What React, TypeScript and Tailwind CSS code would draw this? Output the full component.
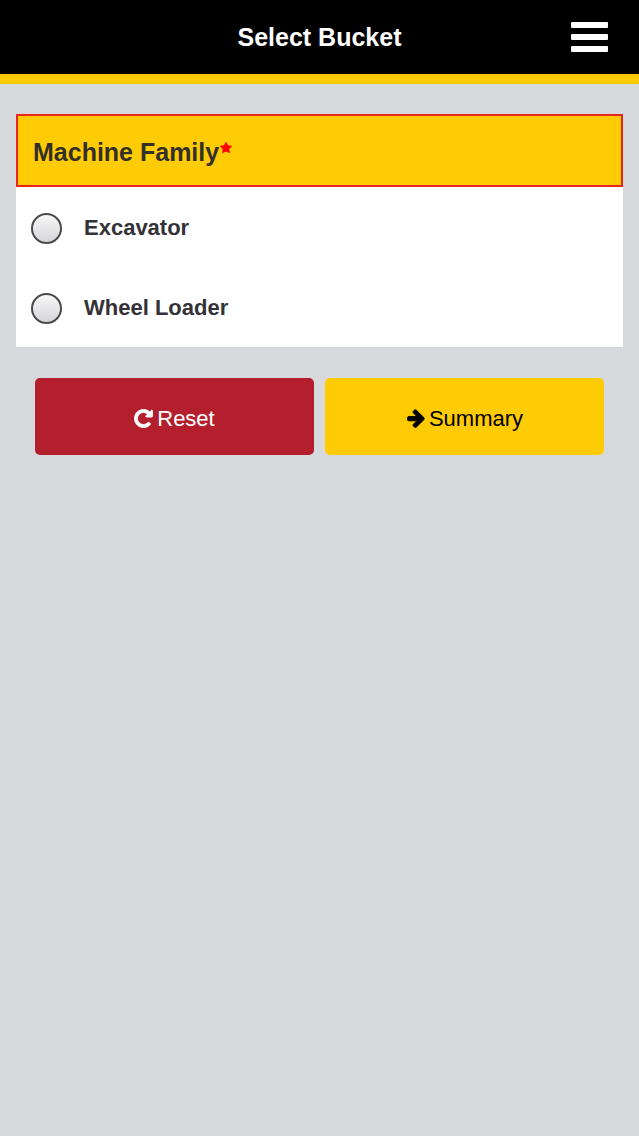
const families = [
  { id: "excavator", label: "Excavator" },
  { id: "wheel-loader", label: "Wheel Loader" },
];

function StarIcon() {
  return (
    <svg viewBox="64 106 1664 1587" className="w-3 h-3 mb-2 fill-[#ff0000]" aria-hidden="true">
      <path d="M1728 647q0 22-26 48l-363 354 86 500q1 7 1 20 0 21-10.500 35.500t-30.500 14.500q-19 0-40-12l-449-236-449 236q-22 12-40 12-21 0-31.500-14.500t-10.500-35.500q0-6 2-20l86-500-364-354q-25-27-25-48 0-37 56-46l502-73 225-455q19-41 49-41t49 41l225 455 502 73q56 9 56 46z" />
    </svg>
  );
}

function RepeatIcon() {
  return (
    <svg viewBox="88 88 1616 1616" className="w-[19px] h-[19px] fill-current stroke-current" strokeWidth="80" strokeLinejoin="round" aria-hidden="true">
      <path d="M1664 256v448q0 26-19 45t-45 19h-448q-42 0-59-40-17-39 14-69l138-138q-148-137-349-137-104 0-198.500 40.500t-163.500 109.500-109.500 163.500-40.500 198.500 40.500 198.500 109.500 163.500 163.500 109.500 198.500 40.500q119 0 225-52t179-147q7-10 23-12 15 0 25 9l137 138q9 8 9.500 20.500t-7.500 22.500q-109 132-264 204.500t-327 72.500q-156 0-298-61t-245-164-164-245-61-298 61-298 164-245 245-164 298-61q147 0 284.500 55.500t244.500 156.500l130-129q29-31 70-14 39 17 39 59z" />
    </svg>
  );
}

function ArrowIcon() {
  return (
    <svg viewBox="24 115 1616 1664" className="w-[19px] h-[19px] fill-current stroke-current" strokeWidth="80" strokeLinejoin="round" aria-hidden="true">
      <path d="M1600 960q0 54-37 91l-651 651q-39 37-91 37-51 0-90-37l-75-75q-38-38-38-91t38-91l293-293h-704q-52 0-84.500-37.500t-32.500-90.500v-128q0-53 32.500-90.500t84.500-37.500h704l-293-294q-38-36-38-90t38-90l75-75q38-38 90-38 53 0 91 38l651 651q37 35 37 90z" />
    </svg>
  );
}

export default function App() {
  return (
    <div className="min-h-screen bg-[#d8d9dc] font-['Liberation_Sans',Arial,sans-serif]">
      <header className="grid grid-cols-[1fr_auto_1fr] items-center h-[84px] px-[31px] bg-black border-b-10 border-[#fdca06]">
        <h1 className="col-start-2 text-[25px] leading-8 font-bold text-white">Select Bucket</h1>
        <button type="button" aria-label="Menu" className="justify-self-end flex flex-col gap-[6px]">
          <span className="w-[37px] h-[6px] rounded-[1px] bg-white" />
          <span className="w-[37px] h-[6px] rounded-[1px] bg-white" />
          <span className="w-[37px] h-[6px] rounded-[1px] bg-white" />
        </button>
      </header>

      <main className="px-4 pt-[30px]">
        <fieldset aria-labelledby="family-title" className="bg-white">
          <div className="flex items-center gap-px h-[73px] px-[15px] pt-0.5 border-2 border-[#e8261c] bg-[#ffcb05]">
            <h2 id="family-title" className="text-[25px] leading-8 font-bold text-[#333029]">Machine Family</h2>
            <StarIcon />
          </div>
          {families.map((family) => (
            <label
              key={family.id}
              htmlFor={family.id}
              className="flex items-center gap-[22px] h-20 px-[15px] pt-0.5 text-[22px] leading-7 font-bold text-[#333236]"
            >
              <input
                type="radio"
                id={family.id}
                name="machine-family"
                className="appearance-none w-[31px] h-[31px] rounded-full border-2 border-[#4b494c] bg-linear-to-b from-[#f8f8f8] to-[#d6d5d8] checked:bg-[#4b494c]"
              />
              {family.label}
            </label>
          ))}
        </fieldset>

        <div className="grid grid-cols-2 gap-[11px] px-[19px] pt-[31px]">
          <button
            type="button"
            className="flex items-center justify-center gap-1 h-[77px] pt-1 rounded-[5px] bg-[#b41f2d] text-[22px] leading-7 text-white"
          >
            <RepeatIcon />
            Reset
          </button>
          <button
            type="button"
            className="flex items-center justify-center gap-1 h-[77px] pt-1 rounded-[5px] bg-[#ffcb05] text-[22px] leading-7 text-black"
          >
            <ArrowIcon />
            Summary
          </button>
        </div>
      </main>
    </div>
  );
}
